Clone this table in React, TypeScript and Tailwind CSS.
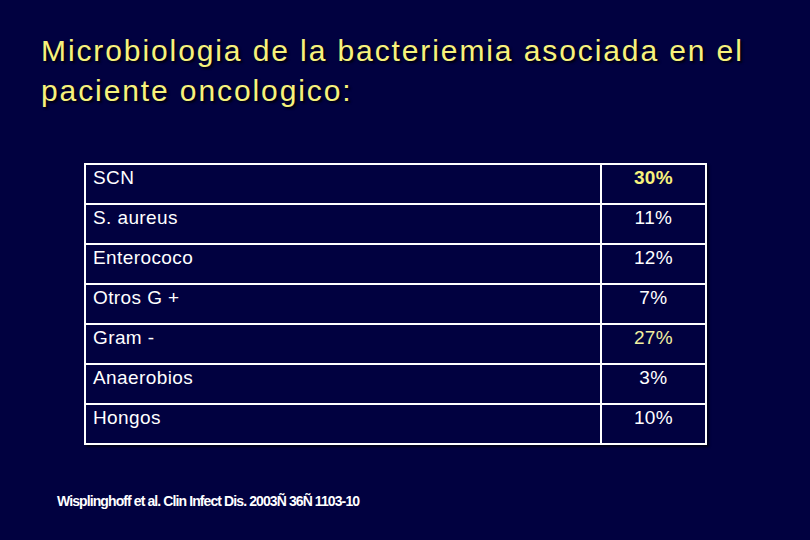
const rows: { name: string; value: string; tone?: "bold" | "yellow" }[] = [
  { name: "SCN", value: "30%", tone: "bold" },
  { name: "S. aureus", value: "11%" },
  { name: "Enterococo", value: "12%" },
  { name: "Otros G +", value: "7%" },
  { name: "Gram -", value: "27%", tone: "yellow" },
  { name: "Anaerobios", value: "3%" },
  { name: "Hongos", value: "10%" },
];

export default function App() {
  return (
    <div
      className="w-[810px] h-[540px] bg-[#010140] overflow-hidden flex flex-col"
      style={{ fontFamily: '"Liberation Sans", Arial, sans-serif' }}
    >
      {/* Title */}
      <h1 className="pl-[41px] pt-[31px] text-[30px] leading-[40px] tracking-[1.9px] text-[#f7f27c] [text-shadow:2px_2px_2px_#000010]">
        Microbiologia de la bacteriemia asociada en el
        <br />
        paciente oncologico:
      </h1>

      {/* Table */}
      <div className="ml-[84px] mt-[52px] w-[623px] shadow-[2px_2px_2px_#000018]">
        <table className="w-full border-collapse border-2 border-white text-[19px] tracking-[0.4px] text-white">
          <tbody>
            {rows.map((r) => (
              <tr key={r.name} className="h-[40px] border-b-2 border-white">
                <td className="w-[516px] border-r-2 border-white pl-[7px] pt-[3px] align-top leading-[20px]">
                  {r.name}
                </td>
                <td
                  className={
                    "text-center pt-[3px] align-top leading-[20px] " +
                    (r.tone === "bold"
                      ? "font-bold text-[#f7f27c]"
                      : r.tone === "yellow"
                      ? "text-[#f2efa0]"
                      : "")
                  }
                >
                  {r.value}
                </td>
              </tr>
            ))}
          </tbody>
        </table>
      </div>

      {/* Citation */}
      <p className="pl-[57px] mt-[46px] text-[14px] leading-[21px] font-bold text-white tracking-[-0.9px]">
        Wisplinghoff et al. Clin Infect Dis. 2003Ñ 36Ñ 1103-10
      </p>
    </div>
  );
}
